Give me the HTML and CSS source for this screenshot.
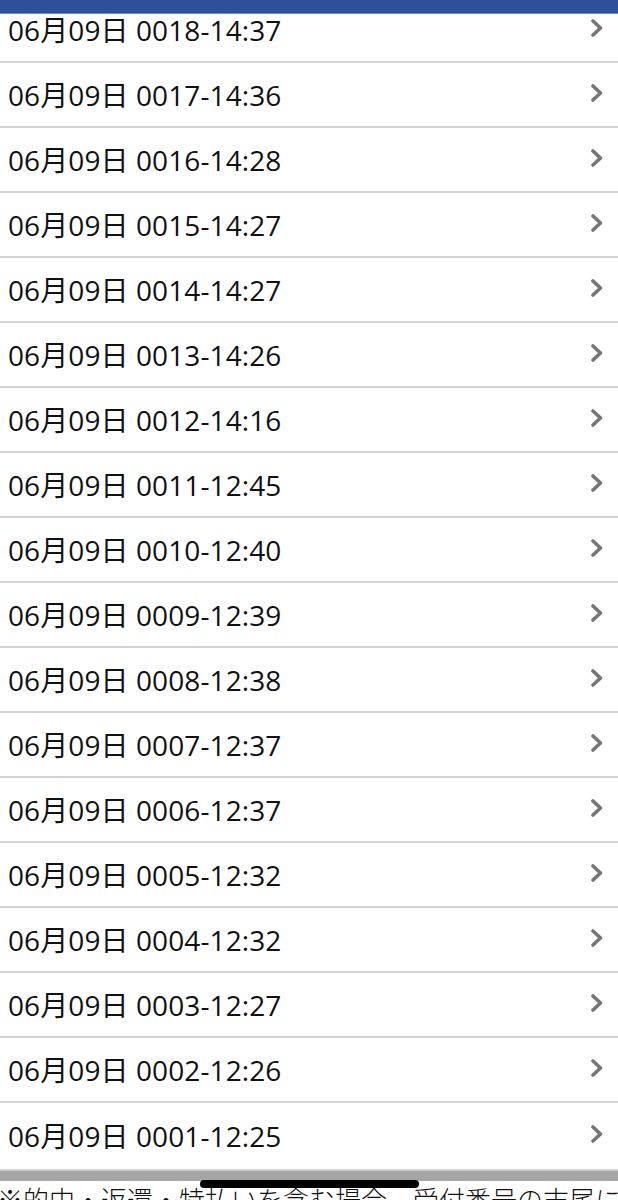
FILE: index.html
```html
<!DOCTYPE html>
<html lang="ja">
<head>
<meta charset="utf-8">
<link rel="stylesheet" href="styles.css">
</head>
<body>
<div class="topbar"></div>
<ul class="list">
  <li class="row"><span class="label">06月09日 0018-14:37</span><span class="chev"><svg viewBox="0 0 14 18" width="14" height="18"><path d="M3 2 L10.5 9 L3 16" fill="none" stroke="#767676" stroke-width="3.6" stroke-linecap="round" stroke-linejoin="round"/></svg></span></li>
  <li class="row"><span class="label">06月09日 0017-14:36</span><span class="chev"><svg viewBox="0 0 14 18" width="14" height="18"><path d="M3 2 L10.5 9 L3 16" fill="none" stroke="#767676" stroke-width="3.6" stroke-linecap="round" stroke-linejoin="round"/></svg></span></li>
  <li class="row"><span class="label">06月09日 0016-14:28</span><span class="chev"><svg viewBox="0 0 14 18" width="14" height="18"><path d="M3 2 L10.5 9 L3 16" fill="none" stroke="#767676" stroke-width="3.6" stroke-linecap="round" stroke-linejoin="round"/></svg></span></li>
  <li class="row"><span class="label">06月09日 0015-14:27</span><span class="chev"><svg viewBox="0 0 14 18" width="14" height="18"><path d="M3 2 L10.5 9 L3 16" fill="none" stroke="#767676" stroke-width="3.6" stroke-linecap="round" stroke-linejoin="round"/></svg></span></li>
  <li class="row"><span class="label">06月09日 0014-14:27</span><span class="chev"><svg viewBox="0 0 14 18" width="14" height="18"><path d="M3 2 L10.5 9 L3 16" fill="none" stroke="#767676" stroke-width="3.6" stroke-linecap="round" stroke-linejoin="round"/></svg></span></li>
  <li class="row"><span class="label">06月09日 0013-14:26</span><span class="chev"><svg viewBox="0 0 14 18" width="14" height="18"><path d="M3 2 L10.5 9 L3 16" fill="none" stroke="#767676" stroke-width="3.6" stroke-linecap="round" stroke-linejoin="round"/></svg></span></li>
  <li class="row"><span class="label">06月09日 0012-14:16</span><span class="chev"><svg viewBox="0 0 14 18" width="14" height="18"><path d="M3 2 L10.5 9 L3 16" fill="none" stroke="#767676" stroke-width="3.6" stroke-linecap="round" stroke-linejoin="round"/></svg></span></li>
  <li class="row"><span class="label">06月09日 0011-12:45</span><span class="chev"><svg viewBox="0 0 14 18" width="14" height="18"><path d="M3 2 L10.5 9 L3 16" fill="none" stroke="#767676" stroke-width="3.6" stroke-linecap="round" stroke-linejoin="round"/></svg></span></li>
  <li class="row"><span class="label">06月09日 0010-12:40</span><span class="chev"><svg viewBox="0 0 14 18" width="14" height="18"><path d="M3 2 L10.5 9 L3 16" fill="none" stroke="#767676" stroke-width="3.6" stroke-linecap="round" stroke-linejoin="round"/></svg></span></li>
  <li class="row"><span class="label">06月09日 0009-12:39</span><span class="chev"><svg viewBox="0 0 14 18" width="14" height="18"><path d="M3 2 L10.5 9 L3 16" fill="none" stroke="#767676" stroke-width="3.6" stroke-linecap="round" stroke-linejoin="round"/></svg></span></li>
  <li class="row"><span class="label">06月09日 0008-12:38</span><span class="chev"><svg viewBox="0 0 14 18" width="14" height="18"><path d="M3 2 L10.5 9 L3 16" fill="none" stroke="#767676" stroke-width="3.6" stroke-linecap="round" stroke-linejoin="round"/></svg></span></li>
  <li class="row"><span class="label">06月09日 0007-12:37</span><span class="chev"><svg viewBox="0 0 14 18" width="14" height="18"><path d="M3 2 L10.5 9 L3 16" fill="none" stroke="#767676" stroke-width="3.6" stroke-linecap="round" stroke-linejoin="round"/></svg></span></li>
  <li class="row"><span class="label">06月09日 0006-12:37</span><span class="chev"><svg viewBox="0 0 14 18" width="14" height="18"><path d="M3 2 L10.5 9 L3 16" fill="none" stroke="#767676" stroke-width="3.6" stroke-linecap="round" stroke-linejoin="round"/></svg></span></li>
  <li class="row"><span class="label">06月09日 0005-12:32</span><span class="chev"><svg viewBox="0 0 14 18" width="14" height="18"><path d="M3 2 L10.5 9 L3 16" fill="none" stroke="#767676" stroke-width="3.6" stroke-linecap="round" stroke-linejoin="round"/></svg></span></li>
  <li class="row"><span class="label">06月09日 0004-12:32</span><span class="chev"><svg viewBox="0 0 14 18" width="14" height="18"><path d="M3 2 L10.5 9 L3 16" fill="none" stroke="#767676" stroke-width="3.6" stroke-linecap="round" stroke-linejoin="round"/></svg></span></li>
  <li class="row"><span class="label">06月09日 0003-12:27</span><span class="chev"><svg viewBox="0 0 14 18" width="14" height="18"><path d="M3 2 L10.5 9 L3 16" fill="none" stroke="#767676" stroke-width="3.6" stroke-linecap="round" stroke-linejoin="round"/></svg></span></li>
  <li class="row"><span class="label">06月09日 0002-12:26</span><span class="chev"><svg viewBox="0 0 14 18" width="14" height="18"><path d="M3 2 L10.5 9 L3 16" fill="none" stroke="#767676" stroke-width="3.6" stroke-linecap="round" stroke-linejoin="round"/></svg></span></li>
  <li class="row last"><span class="label">06月09日 0001-12:25</span><span class="chev"><svg viewBox="0 0 14 18" width="14" height="18"><path d="M3 2 L10.5 9 L3 16" fill="none" stroke="#767676" stroke-width="3.6" stroke-linecap="round" stroke-linejoin="round"/></svg></span></li>
</ul>
<div class="graybar"></div>
<p class="note">※的中・返還・特払いを含む場合、受付番号の末尾に</p>
<div class="home-indicator"></div>
</body>
</html>
```

FILE: styles.css
```css
html, body {
  margin: 0;
  padding: 0;
  background: #ffffff;
  overflow: hidden;
}
body {
  font-family: "Open Sans", "Noto Sans CJK JP", sans-serif;
  color: #111111;
  width: 618px;
  height: 1200px;
  position: relative;
}
.topbar {
  position: fixed;
  top: 0;
  left: 0;
  right: 0;
  height: 13px;
  background: #2d4f9c;
  border-bottom: 1px solid #6d8cc8;
  z-index: 5;
}
.list {
  list-style: none;
  margin: -2px 0 0 0;
  padding: 0;
}
.row {
  display: flex;
  align-items: center;
  justify-content: space-between;
  height: 63px;
  border-bottom: 2px solid #d3d3d3;
  padding: 0 14px 0 8px;
}
.row.last {
  height: 66px;
  border-bottom: 0;
}
.label {
  font-size: 28px;
  line-height: 1;
  letter-spacing: 0.1px;
  font-weight: 400;
}
.chev {
  display: flex;
  margin-top: -4px;
}
.graybar {
  height: 10px;
  background: #a5a5a5;
  border-top: 2px solid #d0d0d0;
}
.note {
  margin: 0;
  font-family: "Noto Sans CJK JP", sans-serif;
  font-weight: 300;
  font-size: 26px;
  line-height: 36px;
  white-space: nowrap;
  margin-left: -3px;
  color: #111111;
}
.home-indicator {
  position: absolute;
  left: 200px;
  top: 1180px;
  width: 219px;
  height: 8px;
  border-radius: 4px;
  background: #000000;
}
```
